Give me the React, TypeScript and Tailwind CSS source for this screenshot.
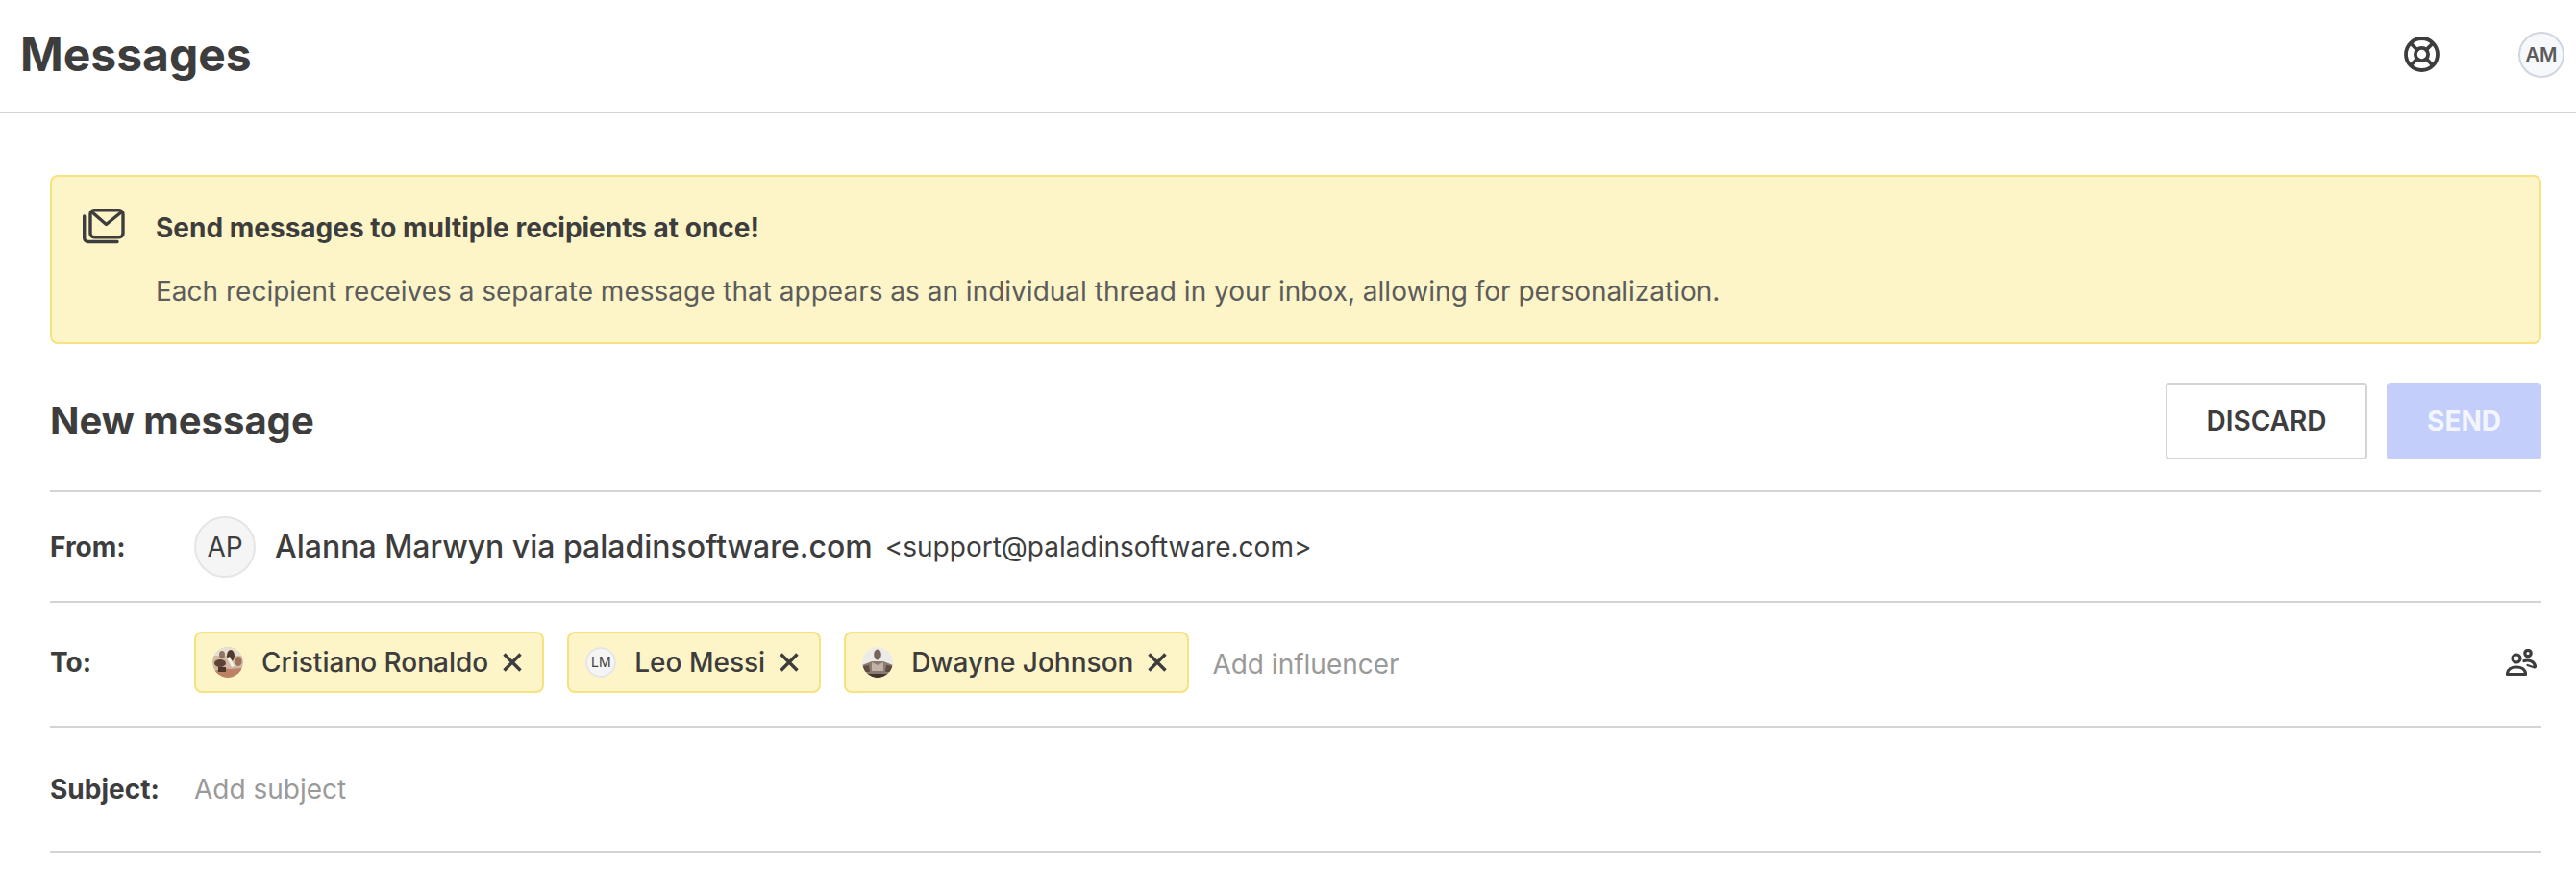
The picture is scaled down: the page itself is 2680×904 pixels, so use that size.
const ink = "text-[#3d3d3d]";

function LifeRing() {
  return (
    <svg width="37" height="37" viewBox="0 0 37 37" fill="none" stroke="#3d3d3d" strokeWidth="3.8">
      <circle cx="18.500" cy="18.500" r="16.500" />
      <circle cx="18.500" cy="18.500" r="6.600" />
      <path d="M7 7l6.800 6.800M30 7l-6.800 6.800M7 30l6.800-6.800M30 30l-6.800-6.800" />
    </svg>
  );
}

function MailStack() {
  return (
    <svg width="44" height="37" viewBox="0 0 44 37" fill="none" stroke="#3d3d3d" strokeWidth="3.400" strokeLinecap="round" strokeLinejoin="round">
      <rect x="8" y="1.700" width="34" height="28" rx="4" />
      <path d="M10 4l14.500 12.500L40 4" />
      <path d="M1.700 8v22.500a4 4 0 0 0 4 4H36" />
    </svg>
  );
}

function People() {
  return (
    <svg width="32" height="28" viewBox="0 0 32 28" fill="none" stroke="#3d3d3d" strokeWidth="3.200" strokeLinecap="round">
      <circle cx="11" cy="10" r="4" />
      <path d="M1.500 26.500c0-5 4.500-7.500 9.500-7.500s9.500 2.500 9.500 7.500z" strokeLinejoin="round" />
      <circle cx="23" cy="4.500" r="3.200" />
      <path d="M19 12.500c5-1.500 11 .5 11.500 6" />
      <path d="M22.500 17l7.500 2.500" strokeWidth="2.200" />
    </svg>
  );
}

function Cross() {
  return (
    <svg width="20" height="20" viewBox="0 0 20 20" fill="none" stroke="#3d3d3d" strokeWidth="3.400">
      <path d="M1.500 1.500l17 17M18.500 1.500l-17 17" />
    </svg>
  );
}

function GroupPhoto() {
  return (
    <svg width="32" height="32" viewBox="0 0 32 32" className="rounded-full">
      <rect width="32" height="32" fill="#d2b9a4" />
      <rect width="32" height="9" fill="#e6dfd2" />
      <ellipse cx="19" cy="9" rx="4" ry="6" fill="#4f3a2d" />
      <ellipse cx="10" cy="8" rx="3" ry="4" fill="#8c7563" />
      <ellipse cx="8" cy="17" rx="6" ry="4" fill="#5e4334" />
      <ellipse cx="27" cy="15" rx="3.500" ry="5" fill="#9c7259" />
      <path d="M2 25l10-3 6 1 12-1v10H2z" fill="#bb8267" />
      <path d="M15 12l5 9 3-1-5-10z" fill="#f4efe8" />
      <rect x="6" y="21" width="8" height="5" fill="#4d372b" />
    </svg>
  );
}

function RockPhoto() {
  return (
    <svg width="32" height="32" viewBox="0 0 32 32" className="rounded-full">
      <rect width="32" height="32" fill="#ecebe8" />
      <path d="M0 19l10-4h12l10 4v13H0z" fill="#8c7a6e" />
      <ellipse cx="16" cy="8" rx="3.800" ry="5.500" fill="#75655a" />
      <path d="M10 16l6 3 6-3v9H10z" fill="#c0b2a6" />
      <path d="M1 20l6-1 1 7H2zM31 20l-6-1-1 7h6z" fill="#5c4c43" />
      <rect x="6" y="28" width="20" height="4" fill="#40342d" />
    </svg>
  );
}

function Chip({ name, avatar }: { name: string; avatar: React.ReactNode }) {
  return (
    <div className="flex h-[64px] items-center rounded-[8px] border-2 border-[#f6e27f] bg-[#fdf5c8] pl-[17px] pr-[21px]">
      <div className="h-[32px] w-[32px] shrink-0 overflow-hidden rounded-full">{avatar}</div>
      <span className={`ml-[19px] text-[28px] font-medium leading-none ${ink}`}>{name}</span>
      <span className="ml-[15px]">
        <Cross />
      </span>
    </div>
  );
}

function Row({ label, height, children }: { label: string; height: string; children: React.ReactNode }) {
  return (
    <div className={`flex items-center border-t-2 border-[#d4d4d4] ${height}`}>
      <div className={`w-[150px] shrink-0 text-[28px] font-bold ${ink}`}>{label}</div>
      {children}
    </div>
  );
}

export default function App() {
  return (
    <div className="h-[904px] w-[2680px] overflow-hidden bg-white" style={{ fontFamily: "Inter, sans-serif" }}>
      {/* Top bar */}
      <header className="flex h-[118px] items-center justify-between border-b-2 border-[#d4d4d4] pb-[3px] pl-[21px] pr-[12px]">
        <h1 className={`text-[48px] font-bold leading-none ${ink}`}>Messages</h1>
        <div className="flex items-center gap-[82px]">
          <LifeRing />
          <div className="flex h-[48px] w-[48px] items-center justify-center rounded-full border-2 border-[#cfd6e0] bg-[#f6f8fc] text-[20px] font-semibold text-[#5c5c5c]">
            AM
          </div>
        </div>
      </header>

      <main className="pl-[52px] pr-[36px] pt-[64px]">
        {/* Notice */}
        <div className="flex h-[176px] rounded-[8px] border-2 border-[#f6e27f] bg-[#fdf5c8] pl-[32px] pt-[33px]">
          <MailStack />
          <div className="ml-[32px] mt-[3px]">
            <p className={`text-[28px] font-bold leading-[34px] ${ink}`}>Send messages to multiple recipients at once!</p>
            <p className="mt-[32px] text-[28px] leading-[34px] text-[#5c5c5c]">
              Each recipient receives a separate message that appears as an individual thread in your inbox, allowing for personalization.
            </p>
          </div>
        </div>

        {/* Composer heading */}
        <div className="flex h-[152px] items-end justify-between pb-[32px]">
          <h2 className={`flex h-[80px] items-center text-[40px] font-bold ${ink}`}>New message</h2>
          <div className="flex gap-[20px]">
            <button className={`h-[80px] w-[210px] rounded-[4px] border-2 border-[#d4d4d4] bg-white text-[28px] font-semibold ${ink}`}>
              DISCARD
            </button>
            <button className="h-[80px] w-[161px] rounded-[4px] bg-[#c3cefb] text-[28px] font-bold text-[#f4f6ff]">SEND</button>
          </div>
        </div>

        <Row label="From:" height="h-[115px]">
          <div className="flex h-[64px] w-[64px] items-center justify-center rounded-full border-2 border-[#e5e5e5] bg-[#f5f5f5] text-[28px] text-[#3d3d3d]">
            AP
          </div>
          <span className={`ml-[20px] text-[32px] font-medium ${ink}`}>Alanna Marwyn via paladinsoftware.com</span>
          <span className={`ml-[13px] text-[28px] ${ink}`}>&lt;support@paladinsoftware.com&gt;</span>
        </Row>

        <Row label="To:" height="h-[130px] pb-[5px]">
          <div className="flex gap-[24px]">
            <Chip name="Cristiano Ronaldo" avatar={<GroupPhoto />} />
            <Chip
              name="Leo Messi"
              avatar={
                <div className="flex h-full w-full items-center justify-center rounded-full border-2 border-[#e5e5e5] bg-[#f5f5f5] text-[14px] text-[#3d3d3d]">
                  LM
                </div>
              }
            />
            <Chip name="Dwayne Johnson" avatar={<RockPhoto />} />
          </div>
          <span className="ml-[24px] translate-y-[2px] text-[28px] text-[#9a9a9a]">Add influencer</span>
          <span className="ml-auto mr-[5px]">
            <People />
          </span>
        </Row>

        <Row label="Subject:" height="h-[132px] border-b-2">
          <span className="text-[28px] text-[#9a9a9a]">Add subject</span>
        </Row>
      </main>
    </div>
  );
}
